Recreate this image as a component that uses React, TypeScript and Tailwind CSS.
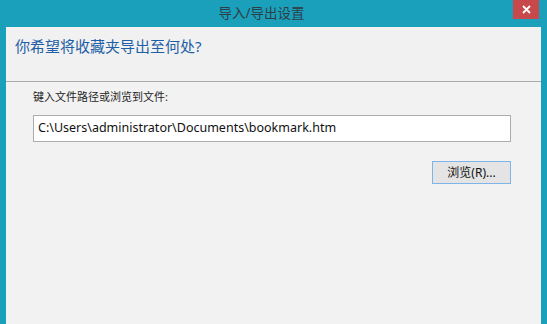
export default function App() {
  const font = { fontFamily: '"Noto Sans", "Noto Sans CJK SC", sans-serif' };
  return (
    <div className="w-[547px] h-[324px] bg-[#1ba0bc] flex flex-col overflow-hidden" style={font}>
      {/* title bar */}
      <div className="h-[27px] shrink-0 relative flex items-center justify-center pr-[24px]">
        <span className="text-[13.5px] text-[#2d3e46] leading-none">导入/导出设置</span>
        <button className="absolute right-[8px] top-0 w-[26px] h-[19px] bg-[#c8494b] flex items-center justify-center">
          <svg width="9" height="9" viewBox="0 0 9 9">
            <path d="M1 1L8 8M8 1L1 8" stroke="#fff" strokeWidth="1.8" />
          </svg>
        </button>
      </div>
      {/* client area */}
      <div className="flex-1 mx-[6px] flex flex-col bg-[#f2f2f2]">
        <div className="h-[55px] bg-[#f1f1f1] border-b border-[#a9a9a9] pl-[9px] pt-[7px]">
          <span className="text-[15px] text-[#1e5fa6] leading-none">你希望将收藏夹导出至何处?</span>
        </div>
        <div className="flex-1 flex flex-col pl-[27px] pr-[30px] pt-[7px]">
          <div className="text-[11px] text-[#222] leading-[16px]">键入文件路径或浏览到文件:</div>
          <div className="mt-[10px] h-[27px] w-[478px] bg-white border border-[#acacac] flex items-center pl-[4px]">
            <span className="text-[12.5px] text-[#111] leading-none">C:\Users\administrator\Documents\bookmark.htm</span>
          </div>
          <div className="mt-[19px] flex justify-end">
            <button className="w-[79px] h-[23px] bg-[#e4e4e4] border border-[#7eb4ea] text-[12px] text-[#111] flex items-center justify-center leading-none">
              浏览(R)...
            </button>
          </div>
        </div>
      </div>
    </div>
  );
}
